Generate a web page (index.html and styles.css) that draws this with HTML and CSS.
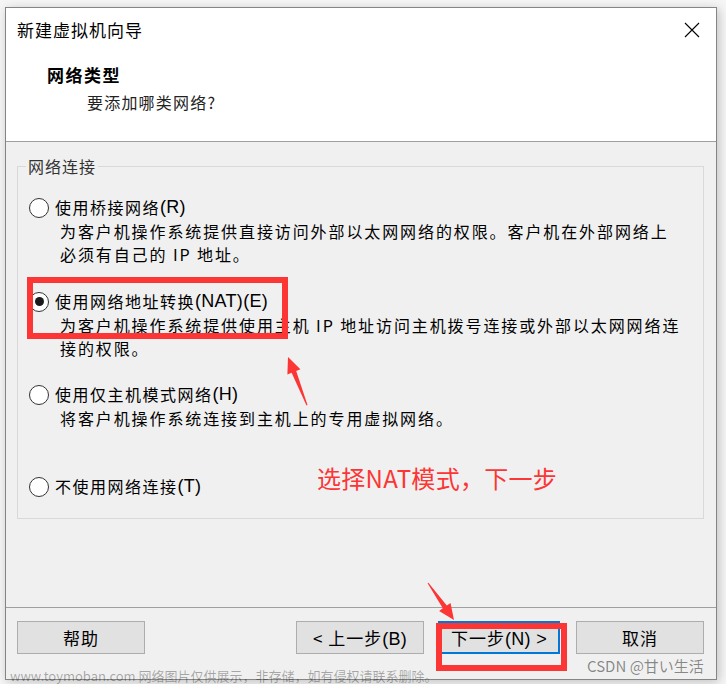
FILE: index.html
```html
<!DOCTYPE html>
<html lang="zh-CN">
<head>
<meta charset="utf-8">
<title>新建虚拟机向导</title>
<link rel="stylesheet" href="styles.css">
</head>
<body>
<div class="window">
  <div class="header">
    <div class="titlebar">
      <span class="title">新建虚拟机向导</span>
      <svg class="close" width="16" height="16" viewBox="0 0 16 16"><path d="M1 1L15 15M15 1L1 15" stroke="#000" stroke-width="1.1" fill="none"/></svg>
    </div>
    <div class="heading">网络类型</div>
    <div class="subheading">要添加哪类网络?</div>
  </div>
  <div class="content">
    <div class="group">
      <span class="legend">网络连接</span>
      <div class="option">
        <div class="opt-label"><span class="radio"></span>使用桥接网络<span class="acc">(R)</span></div>
        <div class="desc">为客户机操作系统提供直接访问外部以太网网络的权限。客户机在外部网络上</div>
        <div class="desc">必须有自己的 IP 地址。</div>
      </div>
      <div class="option gap1">
        <div class="opt-label"><span class="radio checked"></span>使用网络地址转换<span class="acc">(NAT)(E)</span></div>
        <div class="desc">为客户机操作系统提供使用主机 IP 地址访问主机拨号连接或外部以太网网络连</div>
        <div class="desc">接的权限。</div>
      </div>
      <div class="option gap2">
        <div class="opt-label"><span class="radio"></span>使用仅主机模式网络<span class="acc">(H)</span></div>
        <div class="desc">将客户机操作系统连接到主机上的专用虚拟网络。</div>
      </div>
      <div class="option gap3">
        <div class="opt-label"><span class="radio"></span>不使用网络连接<span class="acc">(T)</span></div>
      </div>
    </div>
  </div>
  <div class="footer">
    <button class="btn">帮助</button>
    <div class="spacer"></div>
    <button class="btn">&lt; 上一步<span class="acc">(B)</span></button>
    <button class="btn next">下一步<span class="acc">(N) &gt;</span></button>
    <button class="btn cancel">取消</button>
  </div>
</div>

<div class="mark box1"></div>
<div class="mark box2"></div>
<svg class="arrows" width="726" height="684" viewBox="0 0 726 684">
  <polygon fill="#fc3535" points="288,357 300.4,369.3 296.2,371 307.5,405 306.5,405.4 291.6,372.8 287.4,374.5"/>
  <polygon fill="#fc3535" points="454,620 439.1,610.9 442.8,608.3 427.6,583.3 428.4,582.7 446.8,605.5 450.5,602.9"/>
</svg>
<div class="note">选择NAT模式，下一步</div>
<div class="wm1">www.toymoban.com 网络图片仅供展示，非存储，如有侵权请联系删除。</div>
<div class="wm2">CSDN @甘い生活</div>
</body>
</html>
```
FILE: styles.css
```css
html, body {
  margin: 0;
  padding: 0;
}
body {
  width: 726px;
  height: 684px;
  background: #f6f6f6;
  position: relative;
  overflow: hidden;
  font-family: "Noto Sans CJK SC", "Noto Sans", sans-serif;
}
.window {
  position: relative;
  margin: 7px 0 0 5px;
  width: 710px;
  height: 671px;
  border: 1px solid #858585;
  background: #f0f0f0;
  box-shadow: 2px 2px 10px rgba(0,0,0,0.22);
  display: flex;
  flex-direction: column;
}
.header {
  background: #fff;
  height: 133px;
  border-bottom: 1px solid #a0a0a0;
  flex: none;
}
.titlebar {
  display: flex;
  align-items: center;
  justify-content: space-between;
  padding: 10px 16px 0 11px;
  height: 24px;
}
.title {
  font-size: 17px;
  letter-spacing: 1px;
  color: #000;
  line-height: 24px;
}
.close {
  width: 16px;
  height: 16px;
}
.heading {
  margin: 21px 0 0 41px;
  font-size: 17px;
  font-weight: bold;
  letter-spacing: 1.5px;
  line-height: 24px;
  color: #000;
}
.subheading {
  margin: 3px 0 0 81px;
  font-size: 16px;
  letter-spacing: 1.2px;
  line-height: 24px;
  color: #222;
}
.content {
  flex: 1;
  padding: 24px 0 0 11px;
}
.group {
  position: relative;
  width: 685px;
  height: 322px;
  border: 1px solid #d9d9d9;
  padding-top: 29px;
}
.legend {
  position: absolute;
  left: 8px;
  top: -12px;
  padding: 0 2px;
  background: #f0f0f0;
  font-size: 16px;
  letter-spacing: 1px;
  line-height: 22px;
  color: #333;
}
.option {
  font-size: 16px;
  line-height: 23.5px;
  color: #000;
}
.gap1 { margin-top: 23.5px; }
.gap2 { margin-top: 22.5px; }
.gap3 { margin-top: 45px; }
.opt-label {
  display: flex;
  align-items: center;
  padding-left: 11px;
  letter-spacing: 1.5px;
}
.radio {
  width: 18px;
  height: 18px;
  border: 1px solid #333;
  border-radius: 50%;
  background: #fff;
  margin-right: 6px;
  flex: none;
  display: flex;
  align-items: center;
  justify-content: center;
}
.radio.checked::after {
  content: "";
  width: 9px;
  height: 9px;
  border-radius: 50%;
  background: #1a1a1a;
}
.acc {
  font-family: "Liberation Sans", "Noto Sans", sans-serif;
  font-size: 18px;
  letter-spacing: 0.3px;
}
.desc {
  padding-left: 42px;
  letter-spacing: 1.9px;
  white-space: nowrap;
}
.footer {
  flex: none;
  height: 58px;
  border-top: 1px solid #a0a0a0;
  display: flex;
  align-items: flex-start;
  padding: 13px 12px 0 11px;
}
.spacer { flex: 1; }
.btn {
  width: 128px;
  height: 33px;
  background: #e1e1e1;
  border: 1px solid #adadad;
  font-family: "Noto Sans CJK SC", "Noto Sans", sans-serif;
  font-size: 17px;
  letter-spacing: 1px;
  color: #000;
  padding: 0;
  margin: 0;
}
.btn .acc { font-size: 18px; }
.next {
  width: 122px;
  margin-left: 14px;
  border: 1px solid #0078d7;
  box-shadow: inset 0 0 0 1px #0078d7;
}
.cancel { margin-left: 16px; }

.mark {
  position: absolute;
  border: 6px solid #fc3535;
  box-sizing: border-box;
}
.box1 { left: 27px; top: 277px; width: 261px; height: 62px; }
.box2 { left: 436px; top: 623px; width: 131px; height: 48px; }
.arrows {
  position: absolute;
  left: 0;
  top: 0;
  pointer-events: none;
}
.note {
  position: absolute;
  left: 317px;
  top: 462px;
  font-size: 24px;
  line-height: 32px;
  color: #fc3535;
  letter-spacing: 0.3px;
  white-space: nowrap;
}
.wm1 {
  position: absolute;
  left: 10px;
  top: 667px;
  font-size: 13px;
  line-height: 17px;
  color: rgba(0,0,0,0.32);
  white-space: nowrap;
}
.wm2 {
  position: absolute;
  left: 587px;
  top: 656px;
  font-size: 15px;
  line-height: 20px;
  color: rgba(0,0,0,0.45);
  white-space: nowrap;
}
```
